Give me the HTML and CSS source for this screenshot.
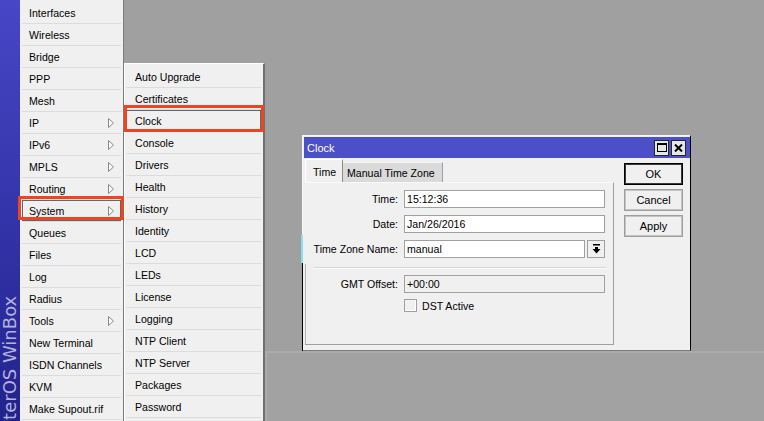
FILE: index.html
```html
<!DOCTYPE html>
<html lang="en">

<head>
    <meta charset="UTF-8">
    <meta name="viewport" content="width=device-width, initial-scale=1.0">
    <link rel="stylesheet" href="styles.css">
    <title>WinBox - Clock</title>
</head>

<body>
    <div class="brand">
        <span class="brand-text">RouterOS WinBox</span>
    </div>

    <ul class="menu main-menu">
        <li class="item">Interfaces</li>
        <li class="item">Wireless</li>
        <li class="item">Bridge</li>
        <li class="item">PPP</li>
        <li class="item">Mesh</li>
        <li class="item">IP <svg class="arrow" width="6" height="10" viewBox="0 0 6 10"><polygon points="0.5,0.5 5.5,5 0.5,9.5" fill="#fafafa" stroke="#8a8a8a"/></svg></li>
        <li class="item">IPv6 <svg class="arrow" width="6" height="10" viewBox="0 0 6 10"><polygon points="0.5,0.5 5.5,5 0.5,9.5" fill="#fafafa" stroke="#8a8a8a"/></svg></li>
        <li class="item">MPLS <svg class="arrow" width="6" height="10" viewBox="0 0 6 10"><polygon points="0.5,0.5 5.5,5 0.5,9.5" fill="#fafafa" stroke="#8a8a8a"/></svg></li>
        <li class="item">Routing <svg class="arrow" width="6" height="10" viewBox="0 0 6 10"><polygon points="0.5,0.5 5.5,5 0.5,9.5" fill="#fafafa" stroke="#8a8a8a"/></svg></li>
        <li class="item marked marked-system">System <svg class="arrow" width="6" height="10" viewBox="0 0 6 10"><polygon points="0.5,0.5 5.5,5 0.5,9.5" fill="#fafafa" stroke="#8a8a8a"/></svg></li>
        <li class="item">Queues</li>
        <li class="item">Files</li>
        <li class="item">Log</li>
        <li class="item">Radius</li>
        <li class="item">Tools <svg class="arrow" width="6" height="10" viewBox="0 0 6 10"><polygon points="0.5,0.5 5.5,5 0.5,9.5" fill="#fafafa" stroke="#8a8a8a"/></svg></li>
        <li class="item">New Terminal</li>
        <li class="item">ISDN Channels</li>
        <li class="item">KVM</li>
        <li class="item">Make Supout.rif</li>
    </ul>

    <ul class="menu submenu">
        <li class="item">Auto Upgrade</li>
        <li class="item">Certificates</li>
        <li class="item marked marked-clock">Clock</li>
        <li class="item">Console</li>
        <li class="item">Drivers</li>
        <li class="item">Health</li>
        <li class="item">History</li>
        <li class="item">Identity</li>
        <li class="item">LCD</li>
        <li class="item">LEDs</li>
        <li class="item">License</li>
        <li class="item">Logging</li>
        <li class="item">NTP Client</li>
        <li class="item">NTP Server</li>
        <li class="item">Packages</li>
        <li class="item">Password</li>
    </ul>

    <div class="desk">
        <div class="back-panel"></div>

        <div class="window">
            <div class="titlebar">
                <span class="title">Clock</span>
                <span class="tb-btn">
                    <svg width="10" height="9" viewBox="0 0 10 9"><rect x="0.5" y="0.5" width="9" height="8" fill="none" stroke="#000"/><rect x="0" y="0" width="10" height="2" fill="#000"/></svg>
                </span>
                <span class="tb-btn">
                    <svg width="9" height="8" viewBox="0 0 9 8"><path d="M1 0.5 L8 7.5 M8 0.5 L1 7.5" stroke="#000" stroke-width="2"/></svg>
                </span>
            </div>

            <div class="win-body">
                <div class="tab-area">
                    <div class="tabs">
                        <span class="tab active">Time</span>
                        <span class="tab">Manual Time Zone</span>
                    </div>

                    <div class="page">
                        <div class="fields">
                            <div class="row">
                                <span class="label">Time:</span>
                                <span class="field">15:12:36</span>
                            </div>
                            <div class="row">
                                <span class="label">Date:</span>
                                <span class="field">Jan/26/2016</span>
                            </div>
                            <div class="row">
                                <span class="label">Time Zone Name:</span>
                                <span class="field short">manual</span>
                                <span class="drop-btn">
                                    <svg width="9" height="10" viewBox="0 0 9 10"><rect x="1" y="0" width="7" height="1.5" fill="#000"/><polygon points="3,3 6,3 6,5 8.5,5 4.5,9.5 0.5,5 3,5" fill="#000"/></svg>
                                </span>
                            </div>
                        </div>

                        <div class="group">
                            <div class="rule"></div>
                            <div class="row">
                                <span class="label">GMT Offset:</span>
                                <span class="field readonly">+00:00</span>
                            </div>
                            <div class="check-row">
                                <span class="check"></span>
                                <span>DST Active</span>
                            </div>
                        </div>
                    </div>
                </div>

                <div class="buttons">
                    <button class="btn default">OK</button>
                    <button class="btn">Cancel</button>
                    <button class="btn">Apply</button>
                </div>
            </div>

            <span class="focus-mark"></span>
        </div>
    </div>
</body>

</html>
```

FILE: styles.css
```css
* {
    box-sizing: border-box;
    margin: 0;
    padding: 0;
}

body {
    width: 764px;
    height: 421px;
    overflow: hidden;
    display: flex;
    background-color: #a0a0a0;
    font-family: "Liberation Sans", Arial, sans-serif;
    font-size: 10.6px;
    color: #000;
}

/* vertical brand strip */
.brand {
    width: 20px;
    flex-shrink: 0;
    background: linear-gradient(#4747c7, #22228d);
    overflow: hidden;
}

.brand-text {
    display: block;
    height: 200px;
    margin-top: 296px;
    writing-mode: vertical-rl;
    transform: rotate(180deg);
    text-align: end;
    font-family: "DejaVu Sans", sans-serif;
    font-size: 18px;
    line-height: 20px;
    color: #b2b2dc;
    white-space: nowrap;
}

/* menus */
.menu {
    list-style: none;
    background-color: #f0f0f0;
    flex-shrink: 0;
}

.main-menu {
    width: 104px;
    padding-top: 2px;
    border-right: 1px solid #7c7c7c;
}

.submenu {
    width: 141px;
    margin-top: 63px;
    padding-top: 2px;
    border-top: 1px solid #fff;
    border-left: 1px solid #fff;
    border-right: 2px solid #6f6f6f;
}

.item {
    height: 22px;
    display: flex;
    align-items: center;
    border-bottom: 1px solid #dcdcdc;
    position: relative;
    white-space: nowrap;
}

.main-menu .item {
    margin: 0 2px;
    padding-left: 7px;
}

.submenu .item {
    margin: 0 2px 0 1px;
    padding-left: 9px;
}

.arrow {
    margin-left: auto;
    margin-right: 7px;
}

.marked {
    box-shadow: inset 0 0 0 1px #5b6b6b;
}

.marked::after {
    content: "";
    position: absolute;
    border: 3px solid #ef4422;
}

.marked-system::after {
    left: -4px;
    right: -3px;
    top: -4px;
    bottom: 1px;
}

.marked-clock::after {
    left: -2px;
    right: -3px;
    top: -5px;
    bottom: -1px;
}

/* desktop area */
.desk {
    flex: 1;
    position: relative;
}

.back-panel {
    position: absolute;
    left: 0;
    right: 0;
    top: 351px;
    bottom: 0;
    border-top: 2px solid #aaabaa;
    border-left: 2px solid #aaabaa;
    background-color: #a1a2a1;
}

.window {
    position: absolute;
    left: 37px;
    top: 135px;
    width: 389px;
    height: 216px;
    padding: 1px 0 0 1px;
    background-color: #f0f0f0;
    border: 1px solid #f8f8f8;
    border-right-color: #000;
    border-bottom-color: #7a7a7a;
}

.window::after {
    content: "";
    position: absolute;
    left: -1px;
    top: 127px;
    width: 1px;
    height: 88px;
    background-color: #000;
}

.focus-mark {
    position: absolute;
    left: -2px;
    top: 99px;
    width: 2px;
    height: 28px;
    background-color: #7fe6ef;
}

.titlebar {
    height: 21px;
    display: flex;
    align-items: center;
    gap: 2px;
    padding: 0 4px 0 3px;
    background-color: #4b50c8;
}

.title {
    flex: 1;
    color: #fff;
    font-size: 11px;
}

.tb-btn {
    width: 15px;
    height: 16px;
    display: flex;
    align-items: center;
    justify-content: center;
    border: 1px solid #262626;
    background-color: #e6e6e6;
}

.win-body {
    display: flex;
    padding-left: 1px;
}

.tab-area {
    width: 309px;
    display: flex;
    flex-direction: column;
}

.tabs {
    height: 23px;
    margin-top: 1px;
    display: flex;
    align-items: flex-end;
}

.tab {
    width: 100px;
    height: 20px;
    display: flex;
    align-items: center;
    padding-left: 4px;
    background-color: #dadada;
    border-top: 1px solid #f4f4f4;
    border-right: 1px solid #a0a0a0;
    white-space: nowrap;
}

.tab.active {
    width: 38px;
    height: 23px;
    padding: 1px 0 0 7px;
    background-color: #f0f0f0;
    border-top-color: #fff;
    border-left: 1px solid #fff;
    border-right-color: #8c8c8c;
}

.page {
    height: 163px;
    display: flex;
    flex-direction: column;
    border-top: 1px solid #fafafa;
    border-right: 1px solid #a0a0a0;
    border-bottom: 1px solid #a0a0a0;
}

.fields {
    display: flex;
    flex-direction: column;
    gap: 7px;
    padding-top: 7px;
}

.row {
    height: 18px;
    display: flex;
    align-items: center;
    gap: 6px;
}

.label {
    width: 93px;
    flex-shrink: 0;
    text-align: right;
    white-space: nowrap;
}

.field {
    width: 201px;
    height: 18px;
    display: flex;
    align-items: center;
    padding-left: 2px;
    background-color: #fff;
    border: 1px solid #a0a0a0;
}

.field.short {
    width: 181px;
}

.field.readonly {
    background-color: #f0f0f0;
}

.drop-btn {
    width: 18px;
    height: 18px;
    margin-left: -4px;
    display: flex;
    align-items: center;
    justify-content: center;
    background-color: #f0f0f0;
    border: 1px solid #a0a0a0;
}

.group {
    flex: 1;
    margin-top: 6px;
    box-shadow: inset 1px 0 0 #b4b4b4;
}

.rule {
    height: 2px;
    margin: 3px 7px 6px 9px;
    border-top: 1px solid #d6d6d6;
    border-bottom: 1px solid #fbfbfb;
}

.check-row {
    display: flex;
    align-items: center;
    gap: 5px;
    margin-top: 6px;
    padding-left: 99px;
}

.check {
    width: 13px;
    height: 13px;
    background-color: #f0f0f0;
    border: 1px solid #a0a0a0;
    box-shadow: inset -1px -1px 0 #fff;
}

.buttons {
    width: 59px;
    margin-left: 10px;
    padding-top: 5px;
    display: flex;
    flex-direction: column;
    gap: 4px;
}

.btn {
    height: 22px;
    font: inherit;
    font-size: 11px;
    color: #000;
    background-color: #f0f0f0;
    border: 1px solid #9d9d9d;
    box-shadow: inset 0 0 0 1px #c4c4c4;
}

.btn.default {
    border-color: #000;
    box-shadow: inset 0 0 0 1px #3a3a3a;
}
```
